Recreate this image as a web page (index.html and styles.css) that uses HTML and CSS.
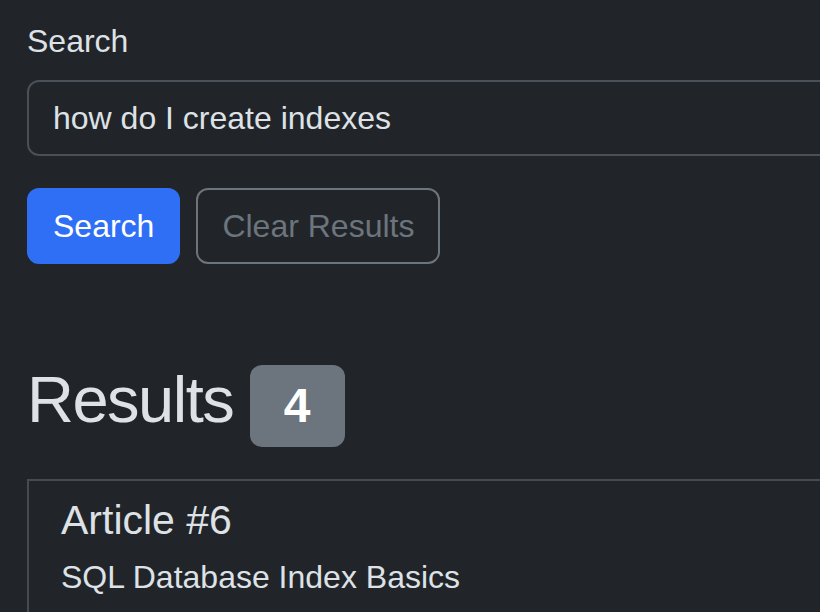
FILE: index.html
```html
<!DOCTYPE html>
<html lang="en">
  <head>
    <meta charset="UTF-8" />
    <meta name="viewport" content="width=device-width, initial-scale=1.0" />
    <title>Search</title>
    <link rel="stylesheet" href="styles.css">
  </head>
  <body>
    <div class="page">
      <form id="search-form" class="search-form">
        <label for="query" class="form-label">Search</label>
        <input type="text" id="query" class="form-control" value="how do I create indexes" />
        <div class="actions">
          <button type="submit" class="btn btn-primary">Search</button>
          <button type="button" class="btn btn-outline">Clear Results</button>
        </div>
      </form>

      <h2 class="results-title">Results <span class="badge">4</span></h2>

      <div class="result-card">
        <h5 class="result-title">Article #6</h5>
        <p class="result-text">SQL Database Index Basics</p>
      </div>
    </div>
  </body>
</html>
```

FILE: styles.css
```css
html {
  overflow: hidden;
}
body {
  font-family: "Liberation Sans", Arial, sans-serif;
  background-color: #212529;
  color: #dee2e6;
  margin: 0;
  font-size: 32px;
  line-height: 1.5;
}
.page {
  width: 1200px;
  padding: 17px 27px 0;
}
.form-label {
  display: block;
  margin-bottom: 15px;
}
.form-control {
  display: block;
  width: 100%;
  box-sizing: border-box;
  height: 76px;
  padding: 12px 24px;
  font-family: inherit;
  font-size: 32px;
  line-height: 1.5;
  color: #dee2e6;
  background-color: #212529;
  border: 2px solid #495057;
  border-radius: 12px;
  outline: none;
}
.actions {
  display: flex;
  gap: 16px;
  margin-top: 32px;
}
.btn {
  height: 76px;
  padding: 12px 24px;
  font-family: inherit;
  font-size: 32px;
  line-height: 1.5;
  border: 2px solid transparent;
  border-radius: 12px;
  cursor: pointer;
  box-sizing: border-box;
}
.btn-primary {
  background-color: #2f6ff5;
  border-color: #2f6ff5;
  color: #fff;
}
.btn-outline {
  background-color: transparent;
  border-color: #6c757d;
  color: #6c757d;
}
.results-title {
  font-size: 65px;
  font-weight: 400;
  letter-spacing: -1.5px;
  line-height: 1.2;
  margin: 97px 0 32px;
}
.badge {
  display: inline-block;
  font-size: 48px;
  font-weight: 700;
  line-height: 1;
  letter-spacing: 0;
  padding: 17px 34px;
  color: #fff;
  background-color: #6c757d;
  border-radius: 12px;
}
.result-card {
  border: 2px solid #474b50;
  padding: 15px 32px;
}
.result-title {
  font-size: 41px;
  font-weight: 400;
  line-height: 1.2;
  margin: 0 0 8px;
}
.result-text {
  margin: 0;
}
```
